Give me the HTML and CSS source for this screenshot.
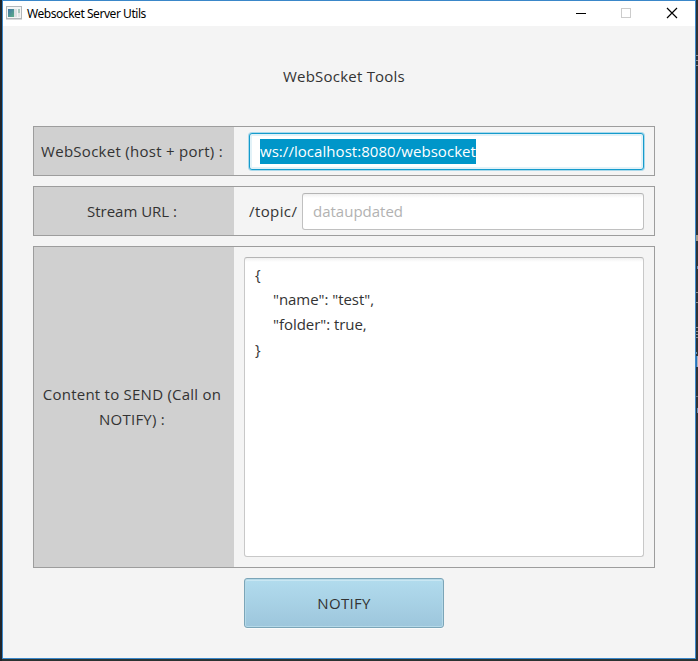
FILE: index.html
```html
<!DOCTYPE html>
<html lang="en">
<head>
<meta charset="utf-8">
<title>Websocket Server Utils</title>
<link rel="stylesheet" href="styles.css">
</head>
<body>
<div class="window">
  <header class="titlebar">
    <svg class="app-icon" width="16" height="14" viewBox="0 0 16 14" shape-rendering="crispEdges">
      <defs><linearGradient id="pane" x1="0" y1="0" x2="1" y2="1"><stop offset="0" stop-color="#3f75a8"/><stop offset="1" stop-color="#5cae86"/></linearGradient></defs>
      <rect x=".5" y=".5" width="15" height="12" fill="#f4f5f5" stroke="#b3b8bb"/>
      <path d="M0 13.5h16" stroke="#d8dadb"/>
      <rect x="2" y="3" width="6" height="8" fill="url(#pane)"/>
      <rect x="8" y="3" width="3" height="8" fill="#dce0e2"/>
      <rect x="12" y="3" width="2" height="4" fill="#a9c9bf"/>
      <rect x="12" y="7" width="2" height="4" fill="#e3e5e6"/>
    </svg>
    <span class="caption">Websocket Server Utils</span>
    <div class="controls">
      <svg class="minimize" width="10" height="10" viewBox="0 0 10 10"><path d="M0 5.5h10" stroke="#000"/></svg>
      <svg width="10" height="10" viewBox="0 0 10 10"><rect x=".5" y=".5" width="9" height="9" fill="none" stroke="#ccc"/></svg>
      <svg width="10" height="10" viewBox="0 0 10 10"><path d="M0 0l10 10M10 0L0 10" stroke="#000" stroke-width="1.2"/></svg>
    </div>
  </header>
  <main class="content">
    <h1 class="heading"><span class="t-heading">WebSocket Tools</span></h1>
    <section class="row">
      <div class="label"><span class="t-host">WebSocket (host + port) :</span></div>
      <div class="body">
        <div class="field focused"><span class="selected t-url">ws://localhost:8080/websocket</span></div>
      </div>
    </section>
    <section class="row">
      <div class="label"><span>Stream URL :</span></div>
      <div class="body">
        <span class="prefix">/topic/</span>
        <div class="field"><span class="placeholder">dataupdated</span></div>
      </div>
    </section>
    <section class="row tall">
      <div class="label"><span class="t-send">Content to SEND (Call on</span><span class="t-send">NOTIFY) :</span></div>
      <div class="body area-body">
        <div class="area">
          <div class="line">{</div>
          <div class="line indent">"name": "test",</div>
          <div class="line indent">"folder": true,</div>
          <div class="line">}</div>
        </div>
      </div>
    </section>
    <button class="notify" type="button">NOTIFY</button>
  </main>
</div>
<svg class="edge" width="2" height="661" viewBox="0 0 2 661" shape-rendering="crispEdges">
  <path d="M0 55.5h2M0 60.5h2M0 65.5h2M0 292.5h2M0 302.5h2M0 327.5h2M0 331.5h2M0 334.5h2M0 337.5h2" stroke="#8c8c8c"/>
  <path d="M0 235h2v6H0z" fill="#a69a86"/>
  <path d="M1 266h1v3H1zM0 352h1v2H0zM1 408h1v5H1z" fill="#6d93bb"/>
  <path d="M0 356h1v11H0z" fill="#2a70b8"/>
  <path d="M1 356h1v11H1z" fill="#a8b4c0"/>
  <path d="M0 396h2" stroke="#707478"/>
</svg>
</body>
</html>
```
FILE: styles.css
```css
* { box-sizing: border-box; }

body {
  margin: 0;
  width: 698px;
  height: 661px;
  overflow: hidden;
  display: flex;
  align-items: flex-start;
  padding-left: 2px;
  background: linear-gradient(90deg, #20252b 0 50%, #2e3236 50%);
  font-family: "Open Sans", "Noto Sans", sans-serif;
  font-size: 15px;
  line-height: 25px;
  color: #333;
}

.window {
  flex: none;
  width: 694px;
  height: 659px;
  border: 1px solid #3a87c9;
  background: #f4f4f4;
  box-shadow: 0 2px 0 #2a3332;
}

.titlebar {
  height: 25px;
  display: flex;
  align-items: center;
  padding: 0 0 1px 3px;
  background: #fff;
}

.app-icon { display: block; }

.caption {
  margin-left: 5px;
  font-family: "Noto Sans", sans-serif;
  font-size: 12px;
  letter-spacing: -0.45px;
  color: #000;
  white-space: nowrap;
}

.controls {
  display: flex;
  gap: 36px;
  margin-left: auto;
  padding-right: 18px;
}

.controls svg { display: block; overflow: visible; }

.controls .minimize { margin-right: -1px; }

.content {
  display: flex;
  flex-direction: column;
  gap: 10px;
  padding: 0 40px 0 30px;
}

.heading {
  height: 90px;
  margin: 0;
  padding-top: 38px;
  font-size: 15px;
  font-weight: 400;
  text-align: center;
}

.row {
  display: flex;
  width: 622px;
  height: 50px;
  border: 1px solid #9d9d9d;
}

.row.tall { height: 322px; }

.label {
  flex: none;
  width: 200px;
  padding-right: 4px;
  display: flex;
  flex-direction: column;
  align-items: center;
  justify-content: center;
  background: #d0d0d0;
}

.label span, .prefix, .field span, .line { white-space: pre; }

.t-heading { letter-spacing: 0.22px; }
.t-host { letter-spacing: 0.28px; }
.t-url { letter-spacing: 0.05px; }
.t-send { letter-spacing: 0.24px; }

.body {
  flex: 1;
  display: flex;
  align-items: center;
  padding: 0 10px 0 15px;
}

.prefix { width: 53px; letter-spacing: 0.4px; }

.field {
  flex: 1;
  height: 37px;
  display: flex;
  align-items: center;
  padding-left: 10px;
  border: 1px solid #c0c0c0;
  border-top-color: #b5b5b5;
  border-radius: 3px;
  background: linear-gradient(#f0f0f0, #fff 4px);
}

.field.focused {
  border-color: #159bcc;
  background: #fff;
  box-shadow: 0 0 0 1px #a9d9eb, inset 0 0 0 2px #e2f2f8;
}

.selected { background: #0096c9; color: #fff; }

.placeholder { color: #b2b2b2; }

.area-body { padding: 10px; align-items: stretch; }

.area {
  flex: 1;
  padding: 4px 10px;
  border: 1px solid #c8c8c8;
  border-top-color: #b5b5b5;
  border-radius: 3px;
  background: linear-gradient(#f0f0f0, #fff 4px);
}

.indent { padding-left: 18px; letter-spacing: -0.05px; }

.notify {
  width: 200px;
  height: 50px;
  margin-left: 211px;
  padding: 0;
  border: 1px solid #7ba5b8;
  border-radius: 3px;
  background: linear-gradient(#b2dcee, #9dc6dc);
  box-shadow: inset 0 0 0 1px #b5d9e8, inset 0 1px 0 1px #c9e7f3, 0 1px 0 #fbfbfb;
  font: inherit;
  letter-spacing: 0.3px;
  color: #333;
}

.edge { flex: none; display: block; }
```
